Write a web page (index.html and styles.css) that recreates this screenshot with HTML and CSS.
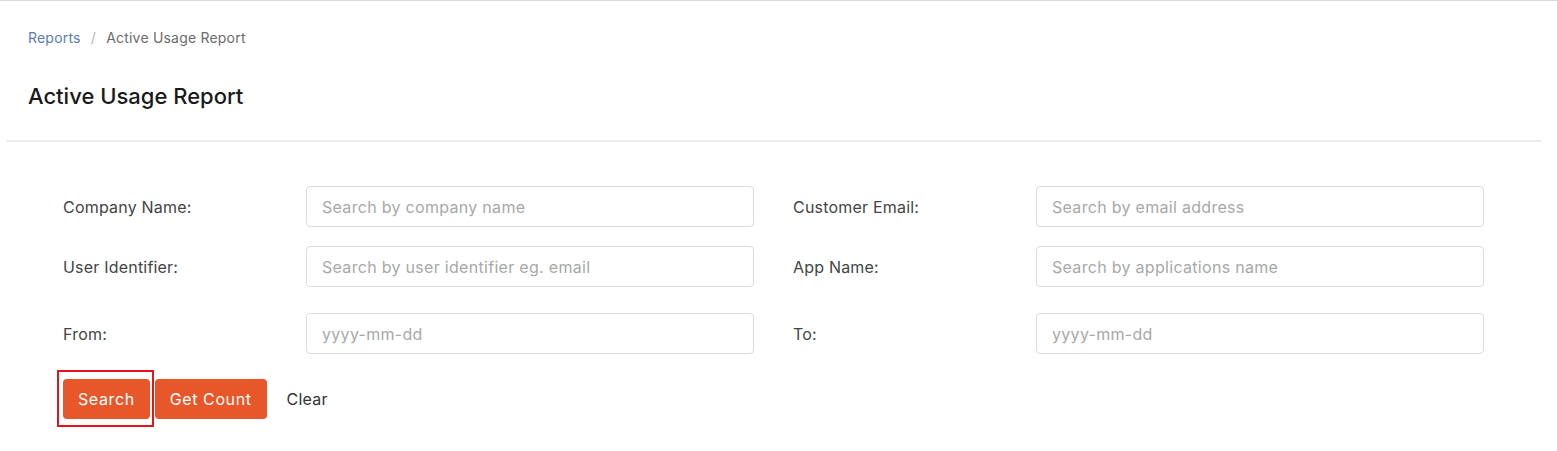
FILE: index.html
```html
<!DOCTYPE html>
<html lang="en">
  <head>
    <meta charset="UTF-8" />
    <meta name="viewport" content="width=device-width, initial-scale=1.0" />
    <title>Active Usage Report</title>
    <link rel="stylesheet" href="styles.css">
  </head>
  <body>
    <div class="page">
      <div class="pageHeader">
        <div class="breadcrumb">
          <a href="#">Reports</a>
          <span class="sep">/</span>
          <span class="current">Active Usage Report</span>
        </div>
        <h2>Active Usage Report</h2>
      </div>
      <hr class="divider" />

      <form class="filters" id="filters">
        <div class="row">
          <div class="field">
            <label for="companyName">Company Name:</label>
            <input type="text" id="companyName" placeholder="Search by company name" />
          </div>
          <div class="field">
            <label for="customerEmail">Customer Email:</label>
            <input type="text" id="customerEmail" placeholder="Search by email address" />
          </div>
        </div>
        <div class="row">
          <div class="field">
            <label for="userIdentifier">User Identifier:</label>
            <input type="text" id="userIdentifier" placeholder="Search by user identifier eg. email" />
          </div>
          <div class="field">
            <label for="appName">App Name:</label>
            <input type="text" id="appName" placeholder="Search by applications name" />
          </div>
        </div>
        <div class="row dates">
          <div class="field">
            <label for="fromDate">From:</label>
            <input type="text" id="fromDate" placeholder="yyyy-mm-dd" />
          </div>
          <div class="field">
            <label for="toDate">To:</label>
            <input type="text" id="toDate" placeholder="yyyy-mm-dd" />
          </div>
        </div>

        <div class="actions">
          <span class="highlight">
            <button type="submit" class="btn">Search</button>
          </span>
          <button type="button" class="btn">Get Count</button>
          <button type="reset" class="link-button">Clear</button>
        </div>
      </form>
    </div>
  </body>
</html>
```

FILE: styles.css
```css
body {
  margin: 0;
  padding: 0;
  background-color: #ffffff;
  font-family: Inter, "Open Sans", sans-serif;
  color: #333333;
}

.page {
  border-top: 1px solid #d9d9d9;
  min-height: 450px;
}

.pageHeader {
  padding: 0 28px;
}

.breadcrumb {
  padding-top: 28px;
  font-size: 14px;
  line-height: 18px;
  letter-spacing: 0.2px;
  color: #6b6b6b;
}

.breadcrumb a {
  color: #5b7cb0;
  text-decoration: none;
}

.breadcrumb .sep {
  color: #b5b5b5;
  margin: 0 6px;
}

h2 {
  margin: 35px 0 0;
  font-size: 22px;
  line-height: 28px;
  font-weight: 500;
  color: #1a1a1a;
}

.divider {
  margin: 30px 16px 0 7px;
  border: none;
  border-top: 2px solid #ececec;
}

.filters {
  padding: 44px 0 0 63px;
}

.row {
  display: flex;
  gap: 39px;
  margin-bottom: 19px;
}

.row.dates {
  margin-top: 26px;
  margin-bottom: 25px;
}

.field {
  display: flex;
  align-items: center;
}

.field label {
  width: 243px;
  font-size: 16px;
  letter-spacing: 0.2px;
  color: #444444;
}

.field input {
  width: 448px;
  height: 41px;
  box-sizing: border-box;
  padding: 0 15px;
  border: 1px solid #dcdcdc;
  border-radius: 4px;
  font-family: inherit;
  font-size: 16px;
  letter-spacing: 0.3px;
  color: #333333;
}

.field input::placeholder {
  color: #a8a8a8;
}

.actions {
  display: flex;
  align-items: center;
  gap: 5px;
}

.highlight {
  display: inline-flex;
  margin: -9px -4px -8px -6px;
  padding: 7px 2px 6px 4px;
  border: 2px solid #e3141b;
}

.btn {
  height: 40px;
  padding: 0 15px;
  border: none;
  border-radius: 4px;
  background-color: #e8572a;
  color: #ffffff;
  font-family: inherit;
  font-size: 16px;
  letter-spacing: 0.6px;
  cursor: pointer;
}

.link-button {
  margin-left: 9px;
  border: none;
  background: none;
  font-family: inherit;
  font-size: 16px;
  letter-spacing: 0.2px;
  color: #333333;
  cursor: pointer;
}
```
